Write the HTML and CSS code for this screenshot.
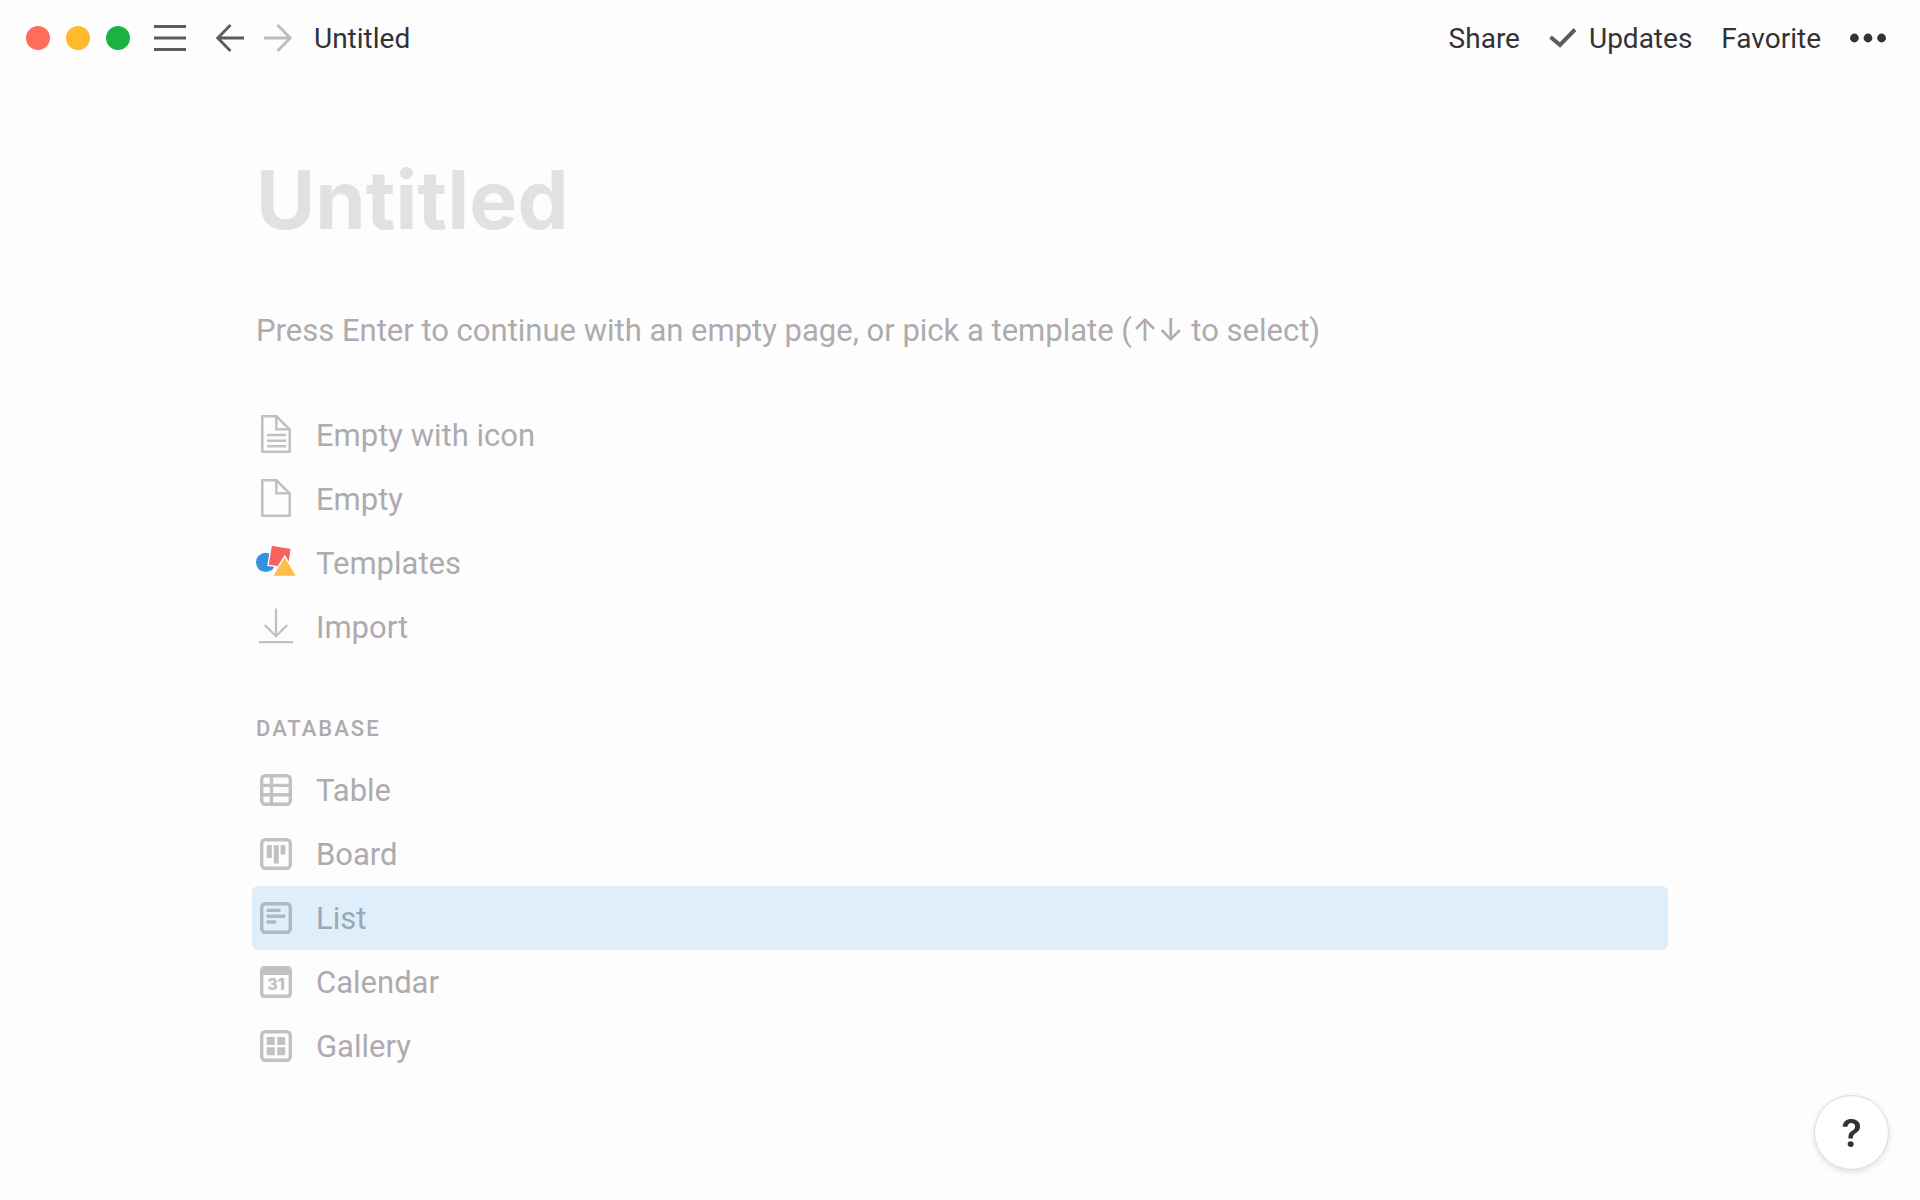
FILE: index.html
```html
<!DOCTYPE html>
<html lang="en">
<head>
    <meta charset="UTF-8" />
    <meta name="viewport" content="width=device-width, initial-scale=1" />
    <title>Untitled</title>
    <link rel="stylesheet" href="styles.css">
</head>
<body>
    <header class="topbar">
        <div class="window-controls">
            <button class="dot dot-close" aria-label="Close"></button>
            <button class="dot dot-minimize" aria-label="Minimize"></button>
            <button class="dot dot-zoom" aria-label="Zoom"></button>
        </div>
        <button class="menu-button" aria-label="Open sidebar">
            <svg width="32" height="28" viewBox="0 0 32 28" stroke="#5c5b5d" stroke-width="3">
                <path d="M0 2.5h32M0 14h32M0 25.5h32" />
            </svg>
        </button>
        <nav class="history">
            <button aria-label="Back">
                <svg width="28" height="28" viewBox="0 0 28 28" fill="none" stroke="#5c5b5d" stroke-width="2.8">
                    <path d="M28 14H2M14.5 1L1.8 14l12.7 13" />
                </svg>
            </button>
            <button aria-label="Forward">
                <svg width="28" height="28" viewBox="0 0 28 28" fill="none" stroke="#bdbcbe" stroke-width="2.8">
                    <path d="M0 14h26M13.5 1l12.7 13-12.7 13" />
                </svg>
            </button>
        </nav>
        <a class="breadcrumb" href="#">Untitled</a>
        <div class="actions">
            <button>Share</button>
            <button class="updates">
                <svg width="28" height="20" viewBox="0 0 28 20" fill="none" stroke="#5c5b5d" stroke-width="4">
                    <path d="M1.5 9l9.5 8L26 1.5" />
                </svg>
                Updates
            </button>
            <button>Favorite</button>
            <button aria-label="More">
                <svg width="36" height="10" viewBox="0 0 36 10" fill="#333235">
                    <circle cx="4.4" cy="5" r="4.4" />
                    <circle cx="18" cy="5" r="4.4" />
                    <circle cx="31.6" cy="5" r="4.4" />
                </svg>
            </button>
        </div>
    </header>

    <main class="page">
        <h1 class="page-title">Untitled</h1>
        <p class="hint">Press Enter to continue with an empty page, or pick a template (↑↓ to select)</p>

        <div class="options">
            <button class="option">
                <svg class="icon" viewBox="0 0 40 40" fill="none" stroke="#c2c0c3" stroke-width="2.5">
                    <path d="M6.3 1.3H20.5L33.7 14.5V36.8H6.3zM20.3 1.3V14.3H33.7M11 20h19M11 25.8h19M11 31.3h19" />
                </svg>
                Empty with icon
            </button>
            <button class="option">
                <svg class="icon" viewBox="0 0 40 40" fill="none" stroke="#c2c0c3" stroke-width="2.5">
                    <path d="M6.3 1.3H20.5L33.7 14.5V36.8H6.3zM20.3 1.3V14.3H33.7" />
                </svg>
                Empty
            </button>
            <button class="option">
                <svg class="icon" viewBox="0 0 40 40">
                    <circle cx="9.7" cy="19.4" r="9.7" fill="#3094dc" />
                    <path d="M15.3 2L35.4 5.4 32.4 25 12 22.4z" fill="#f9615f" stroke="#fefdfe" stroke-width="1.4" />
                    <path d="M28.7 13.2L41 33.5H16.2z" fill="#ffbd4a" stroke="#fefdfe" stroke-width="1.4" />
                </svg>
                Templates
            </button>
            <button class="option">
                <svg class="icon" viewBox="0 0 40 40" fill="none" stroke="#c2c0c3" stroke-width="2.3">
                    <path d="M20 1.5V29M8.7 18L20 29.2 31.3 18M3 35.2H37" />
                </svg>
                Import
            </button>
        </div>

        <h2 class="group-label">DATABASE</h2>
        <div class="options">
            <button class="option">
                <svg class="icon" viewBox="0 0 40 40" fill="none" stroke="#c2c0c3" stroke-width="3.4">
                    <rect x="5.7" y="5.7" width="28.6" height="28.6" rx="3.5" />
                    <path d="M5 15.4h30M5 24.8h30M15.5 5v30" />
                </svg>
                Table
            </button>
            <button class="option">
                <svg class="icon" viewBox="0 0 40 40" fill="#c2c0c3">
                    <rect x="5.7" y="5.7" width="28.6" height="28.6" rx="3.5" fill="none" stroke="#c2c0c3" stroke-width="3.4" />
                    <path d="M10.8 11h5v13h-5zM17.8 11h5v18.5h-5zM24.6 11h4.8v9.5h-4.8z" />
                </svg>
                Board
            </button>
            <button class="option selected">
                <svg class="icon" viewBox="0 0 40 40" fill="none" stroke="#a9b9c5" stroke-width="3.4">
                    <rect x="5.7" y="5.7" width="28.6" height="28.6" rx="3.5" />
                    <path d="M10.7 12.4h13.8M10.7 18.3h18.5M10.7 24h9.3" />
                </svg>
                List
            </button>
            <button class="option">
                <svg class="icon" viewBox="0 0 40 40" fill="#c2c0c3">
                    <path fill-rule="evenodd" d="M8.5 4h23a4.5 4.5 0 0 1 4.5 4.5v23a4.5 4.5 0 0 1-4.5 4.5h-23A4.5 4.5 0 0 1 4 31.5v-23A4.5 4.5 0 0 1 8.5 4zM7.4 13v18.1a1.5 1.5 0 0 0 1.5 1.5h22.2a1.5 1.5 0 0 0 1.5-1.5V13z" />
                    <text class="icon-day" x="20" y="28" text-anchor="middle">31</text>
                </svg>
                Calendar
            </button>
            <button class="option">
                <svg class="icon" viewBox="0 0 40 40" fill="#c2c0c3">
                    <rect x="5.7" y="5.7" width="28.6" height="28.6" rx="3.5" fill="none" stroke="#c2c0c3" stroke-width="3.4" />
                    <path d="M10.7 11h8v8h-8zM21.2 11h8v8h-8zM10.7 21.2h8v8h-8zM21.2 21.2h8v8h-8z" />
                </svg>
                Gallery
            </button>
        </div>
    </main>

    <button class="help">?</button>
</body>
</html>
```
FILE: styles.css
```css
* {
    box-sizing: border-box;
}
body {
    font-family: Roboto, Inter, sans-serif;
    background-color: #fefdfe;
    color: #333235;
    margin: 0;
}
button {
    font: inherit;
    color: inherit;
    background: none;
    border: 0;
    padding: 0;
    cursor: pointer;
}
svg {
    display: block;
    flex-shrink: 0;
}

/* top bar */
.topbar {
    display: flex;
    align-items: center;
    height: 76px;
    padding: 0 34px 0 26px;
    font-size: 28px;
}
.window-controls {
    display: flex;
    gap: 16px;
}
.dot {
    width: 24px;
    height: 24px;
    border-radius: 50%;
}
.dot-close {
    background-color: #ff6c59;
}
.dot-minimize {
    background-color: #ffba2b;
}
.dot-zoom {
    background-color: #1db140;
}
.menu-button {
    margin-left: 24px;
}
.history {
    display: flex;
    gap: 20px;
    margin: 0 22px 0 30px;
}
.breadcrumb {
    color: inherit;
    text-decoration: none;
}
.actions {
    display: flex;
    align-items: center;
    gap: 29px;
    margin-left: auto;
}
.updates {
    display: flex;
    align-items: center;
    gap: 12px;
}

/* page body */
.page {
    padding: 76px 252px 100px;
    color: #adabae;
}
.page-title {
    margin: 0 0 59px;
    padding-left: 4px;
    font-family: Inter, sans-serif;
    font-size: 81px;
    line-height: 96px;
    font-weight: 700;
    color: #e2e0e3;
}
.hint {
    margin: 0 0 48px;
    padding-left: 4px;
    font-size: 31px;
    line-height: 48px;
}
.options {
    display: flex;
    flex-direction: column;
}
.option {
    display: flex;
    align-items: center;
    gap: 20px;
    height: 64px;
    padding: 0 4px;
    border-radius: 6px;
    font-size: 31px;
    text-align: left;
}
.option.selected {
    background-color: #dfeefb;
    color: #98a9b5;
}
.icon {
    width: 40px;
    height: 40px;
}
.icon-day {
    font-family: Inter, sans-serif;
    font-size: 16px;
    font-weight: 800;
}
.group-label {
    margin: 41px 0 0;
    padding-left: 4px;
    font-size: 22px;
    line-height: 58px;
    font-weight: 500;
    letter-spacing: 2px;
}

.help {
    position: fixed;
    right: 31px;
    bottom: 30px;
    width: 75px;
    height: 75px;
    border: 1px solid #dcdadd;
    border-radius: 50%;
    background-color: #fff;
    box-shadow: 0 2px 6px rgba(0, 0, 0, 0.12);
    font-family: Inter, sans-serif;
    font-size: 38px;
    font-weight: 600;
}
```
